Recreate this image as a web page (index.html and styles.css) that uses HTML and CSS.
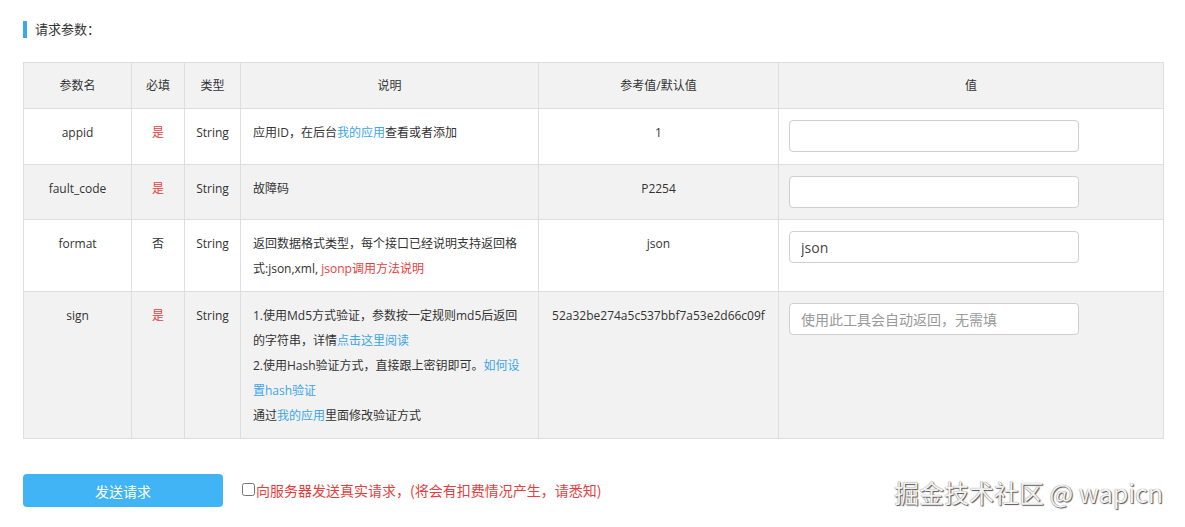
FILE: index.html
```html
<!DOCTYPE html>
<html lang="zh-CN">
<head>
<meta charset="utf-8">
<title>请求参数</title>
<link rel="stylesheet" href="styles.css">
</head>
<body>
<div class="page">
  <h3 class="section-title">请求参数：</h3>
  <table class="params">
    <colgroup>
      <col class="c-name"><col class="c-req"><col class="c-type"><col class="c-desc"><col class="c-ref"><col class="c-val">
    </colgroup>
    <thead>
      <tr><th>参数名</th><th>必填</th><th>类型</th><th>说明</th><th>参考值/默认值</th><th>值</th></tr>
    </thead>
    <tbody>
      <tr>
        <td class="center">appid</td>
        <td class="center red">是</td>
        <td class="center">String</td>
        <td class="desc">应用ID，在后台<a class="link">我的应用</a>查看或者添加</td>
        <td class="center">1</td>
        <td class="val"><input class="field" type="text" value=""></td>
      </tr>
      <tr class="alt">
        <td class="center">fault_code</td>
        <td class="center red">是</td>
        <td class="center">String</td>
        <td class="desc">故障码</td>
        <td class="center">P2254</td>
        <td class="val"><input class="field" type="text" value=""></td>
      </tr>
      <tr>
        <td class="center">format</td>
        <td class="center">否</td>
        <td class="center">String</td>
        <td class="desc">返回数据格式类型，每个接口已经说明支持返回格式:json,xml, <a class="link red">jsonp调用方法说明</a></td>
        <td class="center">json</td>
        <td class="val"><input class="field" type="text" value="json"></td>
      </tr>
      <tr class="alt">
        <td class="center">sign</td>
        <td class="center red">是</td>
        <td class="center">String</td>
        <td class="desc">1.使用Md5方式验证，参数按一定规则md5后返回的字符串，详情<a class="link">点击这里阅读</a><br>2.使用Hash验证方式，直接跟上密钥即可。<a class="link">如何设置hash验证</a><br>通过<a class="link">我的应用</a>里面修改验证方式</td>
        <td class="center">52a32be274a5c537bbf7a53e2d66c09f</td>
        <td class="val"><input class="field" type="text" placeholder="使用此工具会自动返回，无需填"></td>
      </tr>
    </tbody>
  </table>
  <div class="actions">
    <button class="send" type="button">发送请求</button>
    <label class="real"><input type="checkbox" class="check">向服务器发送真实请求，(将会有扣费情况产生，请悉知)</label>
  </div>
  <div class="watermark">掘金技术社区 @ wapicn</div>
</div>
</body>
</html>
```

FILE: styles.css
```css
html, body {
  margin: 0;
  padding: 0;
  background: #fff;
}
body {
  font-family: "Open Sans", "Noto Sans CJK SC", sans-serif;
  color: #333;
  font-size: 12px;
}
.page {
  position: relative;
  padding: 21px 23px 0;
  height: 506px;
}
.section-title {
  margin: 0 0 24px;
  font-weight: normal;
  font-size: 13px;
  line-height: 17px;
  height: 17px;
  border-left: 4px solid #3aa9e8;
  padding-left: 8px;
  color: #333;
}
.params {
  border-collapse: collapse;
  table-layout: fixed;
  width: 1140px;
}
.c-name { width: 108px; }
.c-req { width: 53px; }
.c-type { width: 56px; }
.c-desc { width: 298px; }
.c-ref { width: 240px; }
.c-val { width: 385px; }
.params th, .params td {
  border: 1px solid #dedede;
  line-height: 25px;
  font-size: 12px;
  vertical-align: top;
}
.params th {
  background: #f2f2f2;
  font-weight: normal;
  padding: 10px 4px;
  text-align: center;
}
.params td {
  padding: 11px 4px 10px;
  text-align: left;
}
.params td.center {
  text-align: center;
  white-space: nowrap;
}
.params td.desc {
  padding-left: 12px;
  padding-right: 12px;
  word-break: break-all;
}
.params td.val {
  padding-left: 10px;
  padding-right: 10px;
}
.params tr.alt td { background: #f2f2f2; }
.params td.red { color: #e53e3e; }
.link { color: #3ba6e6; text-decoration: none; }
.link.red { color: #e53e3e; }
.field {
  display: block;
  box-sizing: border-box;
  width: 290px;
  height: 32px;
  margin: 0 0 1.5px;
  padding: 0 11px;
  border: 1px solid #cfcfcf;
  border-radius: 4px;
  background: #fff;
  font-family: "Open Sans", "Noto Sans CJK SC", sans-serif;
  font-size: 14px;
  color: #444;
  outline: none;
}
.field::placeholder { color: #999; }
.actions {
  display: flex;
  align-items: flex-start;
  margin-top: 35px;
}
.send {
  width: 200px;
  height: 33px;
  border: 0;
  border-radius: 4px;
  background: #40b4f5;
  color: #fff;
  font-family: "Noto Sans CJK SC", sans-serif;
  font-size: 14px;
  cursor: pointer;
}
.real {
  display: flex;
  align-items: center;
  margin-left: 19px;
  margin-top: 7px;
  color: #e53e3e;
  font-family: "Noto Sans CJK SC", sans-serif;
  font-size: 14px;
  line-height: 18px;
}
.check {
  width: 13px;
  height: 13px;
  margin: 0 1px 2px 0;
}
.watermark {
  position: absolute;
  left: 894px;
  top: 476px;
  font-family: "Noto Sans CJK SC", sans-serif;
  font-size: 25px;
  line-height: 32px;
  color: #f2f2f2;
  text-shadow: 1px 1px 1px #555, 0 0 1px #666;
  white-space: nowrap;
}
```
